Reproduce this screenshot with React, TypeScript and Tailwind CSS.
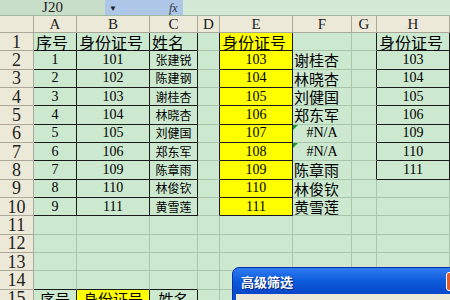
const COLS = ["A", "B", "C", "D", "E", "F", "G", "H"];

// row data, one entry per column A..H
const ROWS: string[][] = [
  ["序号", "身份证号", "姓名", "", "身份证号", "", "", "身份证号"],
  ["1", "101", "张建锐", "", "103", "谢桂杏", "", "103"],
  ["2", "102", "陈建钢", "", "104", "林晓杏", "", "104"],
  ["3", "103", "谢桂杏", "", "105", "刘健国", "", "105"],
  ["4", "104", "林晓杏", "", "106", "郑东军", "", "106"],
  ["5", "105", "刘健国", "", "107", "#N/A", "", "109"],
  ["6", "106", "郑东军", "", "108", "#N/A", "", "110"],
  ["7", "109", "陈章雨", "", "109", "陈章雨", "", "111"],
  ["8", "110", "林俊钦", "", "110", "林俊钦", "", ""],
  ["9", "111", "黄雪莲", "", "111", "黄雪莲", "", ""],
  ["", "", "", "", "", "", "", ""],
  ["", "", "", "", "", "", "", ""],
  ["", "", "", "", "", "", "", ""],
  ["", "", "", "", "", "", "", ""],
  ["序号", "身份证号", "姓名", "", "", "", "", ""],
];

const serif = "font-['Liberation_Serif','Noto_Sans_CJK_SC',serif]";
const cjk = "font-['Noto_Sans_CJK_SC',sans-serif]";

function inTable(r: number, c: number) {
  if (r <= 10 && c <= 2) return true;
  if (r <= 10 && c === 4) return true;
  if (r <= 8 && c === 7) return true;
  if (r === 15 && c <= 2) return true;
  return false;
}

function isYellow(r: number, c: number) {
  return (c === 4 && r <= 10) || (r === 15 && c === 1);
}

function textClass(r: number, c: number, t: string) {
  if (r === 1) return `${cjk} text-[16px] justify-start pl-[2px]`;
  if (r === 15) return `${cjk} text-[15px] justify-center`;
  if (t === "#N/A") return `${serif} text-[14px] justify-center`;
  if (/^\d+$/.test(t)) return `${serif} text-[14px] justify-center`;
  if (c === 5) return `${cjk} text-[15px] justify-start pl-[1px]`;
  return `${cjk} text-[12px] justify-center`;
}

function Cell({ r, c }: { r: number; c: number }) {
  const t = ROWS[r - 1][c];
  const right = inTable(r, c) || inTable(r, c + 1);
  const bottom = inTable(r, c) || inTable(r + 1, c);
  const err = c === 5 && (r === 6 || r === 7);
  return (
    <div
      className={[
        "relative flex items-center overflow-visible whitespace-nowrap leading-none text-black border-r border-b",
        isYellow(r, c) ? "bg-[#ffff00]" : "bg-[#cce8cf]",
        right ? "border-r-[#1a1a1a]" : "border-r-[#a9c6ad]",
        bottom ? "border-b-[#1a1a1a]" : "border-b-[#a9c6ad]",
        textClass(r, c, t),
      ].join(" ")}
    >
      {err && (
        <span className="absolute left-0 top-0 h-0 w-0 border-t-[5px] border-r-[5px] border-t-[#1f9a2a] border-r-transparent" />
      )}
      <span className="leading-none">{t}</span>
    </div>
  );
}

function Dialog() {
  return (
    <div className="absolute left-[232px] top-[267px] h-[50px] w-[240px] rounded-t-[7px] bg-[#0a4fd6] border border-[#0831a8] overflow-hidden">
      <div className="flex h-[26px] items-center bg-gradient-to-b from-[#2f7cf0] via-[#0b5bdc] to-[#0846c8] pl-[8px]">
        <span className={`${cjk} text-[13px] font-bold leading-none text-white [text-shadow:1px_1px_0_#0a2a80]`}>
          高级筛选
        </span>
        <span className="ml-[153px] h-[19px] w-[20px] shrink-0 rounded-[3px] border border-white bg-[#e05a2c]" />
      </div>
      <div className="mx-[3px] h-full bg-[#ece9d8]" />
    </div>
  );
}

export default function App() {
  return (
    <div className="relative h-[300px] w-[450px] overflow-hidden bg-[#d4e9d6]">
      {/* formula bar */}
      <div className="flex h-[16px] items-stretch border-b border-[#9fb8a2]">
        <div className={`${serif} flex w-[105px] items-center justify-center bg-[#c9dec9] text-[15px] leading-none text-[#222]`}>
          J20
        </div>
        <div className="flex w-[78px] items-center bg-[#aec7e8]">
          <span className="ml-[4px] text-[8px] leading-none text-[#222]">▼</span>
          <span className={`${serif} ml-[52px] text-[12px] italic leading-none text-[#333]`}>fx</span>
        </div>
        <div className="flex-1 bg-[#d4e9d6]" />
      </div>

      {/* sheet */}
      <div className="grid grid-cols-[34px_43px_73px_48px_22px_73px_59px_25px_73px] grid-rows-[17px_repeat(15,18.33px)]">
        <div className="border-r border-b border-[#aca899] bg-[#ece9d8]" />
        {COLS.map((l) => (
          <div
            key={l}
            className={`${serif} flex items-center justify-center border-r border-b border-[#aca899] bg-[#ece9d8] text-[15px] leading-none text-[#222]`}
          >
            {l}
          </div>
        ))}
        {ROWS.map((_, i) => (
          <div key={i} className="contents">
            <div
              className={`${serif} flex items-center justify-center border-r border-b border-[#aca899] bg-[#ece9d8] text-[18px] leading-none text-[#222]`}
            >
              {i + 1}
            </div>
            {COLS.map((_, c) => (
              <Cell key={c} r={i + 1} c={c} />
            ))}
          </div>
        ))}
      </div>

      <Dialog />
    </div>
  );
}
